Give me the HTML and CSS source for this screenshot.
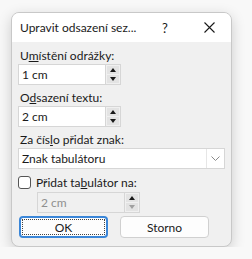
FILE: index.html
```html
<!DOCTYPE html>
<html lang="cs">
<head>
    <meta charset="UTF-8">
    <title>Upravit odsazení seznamu</title>
    <link rel="stylesheet" href="styles.css">
</head>
<body>
    <div class="dialog">
        <div class="title-bar">
            <span class="title">Upravit odsazení sez...</span>
            <span class="help">?</span>
            <svg class="close" width="11" height="11" viewBox="0 0 11 11">
                <path d="M0.5 0.5 L10.5 10.5 M10.5 0.5 L0.5 10.5" stroke="#1a1a1a" stroke-width="1.1" fill="none"/>
            </svg>
        </div>
        <div class="content">
            <label class="field-label">U<u>m</u>ístění odrážky:</label>
            <div class="spin">
                <div class="spin-input">1 cm</div>
                <div class="spin-buttons">
                    <span class="spin-btn"><i class="arrow-up"></i></span>
                    <span class="spin-btn"><i class="arrow-down"></i></span>
                </div>
            </div>

            <label class="field-label">O<u>d</u>sazení textu:</label>
            <div class="spin">
                <div class="spin-input">2 cm</div>
                <div class="spin-buttons">
                    <span class="spin-btn"><i class="arrow-up"></i></span>
                    <span class="spin-btn"><i class="arrow-down"></i></span>
                </div>
            </div>

            <label class="field-label">Za čís<u>l</u>o přidat znak:</label>
            <div class="select">
                <span class="select-value">Znak tabulátoru</span>
                <span class="select-arrow">
                    <svg width="9" height="5" viewBox="0 0 9 5">
                        <path d="M0.5 0.5 L4.5 4.5 L8.5 0.5" fill="none" stroke="#8a8a8a" stroke-width="1"/>
                    </svg>
                </span>
            </div>

            <div class="check-row">
                <span class="checkbox"></span>
                <span class="check-label">Přidat ta<u>b</u>ulátor na:</span>
            </div>
            <div class="spin spin-disabled">
                <div class="spin-input">2 cm</div>
                <div class="spin-buttons">
                    <span class="spin-btn"><i class="arrow-up"></i></span>
                    <span class="spin-btn"><i class="arrow-down"></i></span>
                </div>
            </div>

            <div class="buttons">
                <button class="btn btn-default"><span class="focus-ring">OK</span></button>
                <button class="btn">Storno</button>
            </div>
        </div>
    </div>
</body>
</html>
```

FILE: styles.css
```css
body {
    margin: 0;
    padding: 0;
    background: #f8f8f8;
    font-family: 'Lato', 'Noto Sans', sans-serif;
    font-size: 12px;
    color: #1a1a1a;
}

.dialog {
    margin: 12px 0 0 11px;
    width: 221px;
    height: 235px;
    box-sizing: border-box;
    border: 1px solid #c8c8c8;
    border-radius: 8px;
    overflow: hidden;
    background: #f0f0f0;
    box-shadow: 0 4px 14px rgba(0, 0, 0, 0.18);
}

.title-bar {
    height: 29px;
    background: #ffffff;
    display: flex;
    align-items: center;
    padding-left: 8px;
}

.title {
    font-size: 12px;
    width: 142px;
    flex-shrink: 0;
    white-space: nowrap;
}

.help {
    font-size: 13px;
    width: 42px;
    flex-shrink: 0;
}

.close {
    flex-shrink: 0;
    display: block;
}

.content {
    padding: 6px 6px 0 6px;
    display: flex;
    flex-direction: column;
}

.field-label {
    display: block;
    line-height: 15px;
    padding-left: 2px;
    margin-bottom: 1px;
}

.spin {
    display: flex;
    height: 21px;
    margin-bottom: 5px;
}

.spin-input {
    width: 87px;
    box-sizing: border-box;
    background: #ffffff;
    border: 1px solid #d6d6d6;
    border-right: none;
    padding-left: 3px;
    line-height: 19px;
}

.spin-buttons {
    width: 16px;
    box-sizing: border-box;
    border: 1px solid #d6d6d6;
    background: #f0f0f0;
    display: flex;
    flex-direction: column;
    padding: 1px;
    gap: 1px;
}

.spin-btn {
    flex: 1;
    background: #e3e3e3;
    display: flex;
    align-items: center;
    justify-content: center;
}

.arrow-up {
    width: 0;
    height: 0;
    border-left: 3.5px solid transparent;
    border-right: 3.5px solid transparent;
    border-bottom: 4px solid #1a1a1a;
}

.arrow-down {
    width: 0;
    height: 0;
    border-left: 3.5px solid transparent;
    border-right: 3.5px solid transparent;
    border-top: 4px solid #1a1a1a;
}

.spin-disabled {
    margin-left: 19px;
    margin-bottom: 3px;
}

.spin-disabled .spin-input {
    background: #f0f0f0;
    color: #8f8f8f;
}

.spin-disabled .arrow-down {
    border-top-color: #a0a0a0;
}

.select {
    height: 21px;
    box-sizing: border-box;
    background: #ffffff;
    border: 1px solid #d6d6d6;
    display: flex;
    align-items: center;
    margin-bottom: 6px;
}

.select-value {
    flex: 1;
    padding-left: 3px;
}

.select-arrow {
    width: 17px;
    height: 19px;
    border-left: 1px solid #e6e6e6;
    display: flex;
    align-items: center;
    justify-content: center;
}

.check-row {
    display: flex;
    align-items: center;
    height: 15px;
    margin-bottom: 2px;
}

.checkbox {
    width: 11px;
    height: 11px;
    border: 1px solid #555555;
    border-radius: 3px;
    background: #ffffff;
    margin-right: 5px;
}

.buttons {
    display: flex;
    gap: 12px;
    padding-left: 1px;
}

.btn {
    width: 89px;
    height: 22px;
    box-sizing: border-box;
    background: #fdfdfd;
    border: 1px solid #d0d0d0;
    border-radius: 4px;
    font-family: inherit;
    font-size: 12px;
    color: #1a1a1a;
    padding: 0;
}

.btn-default {
    border: 2px solid #3a86d8;
    padding: 1px;
}

.focus-ring {
    display: flex;
    align-items: center;
    justify-content: center;
    height: 100%;
    box-sizing: border-box;
    border: 1px dotted #444444;
}
```
